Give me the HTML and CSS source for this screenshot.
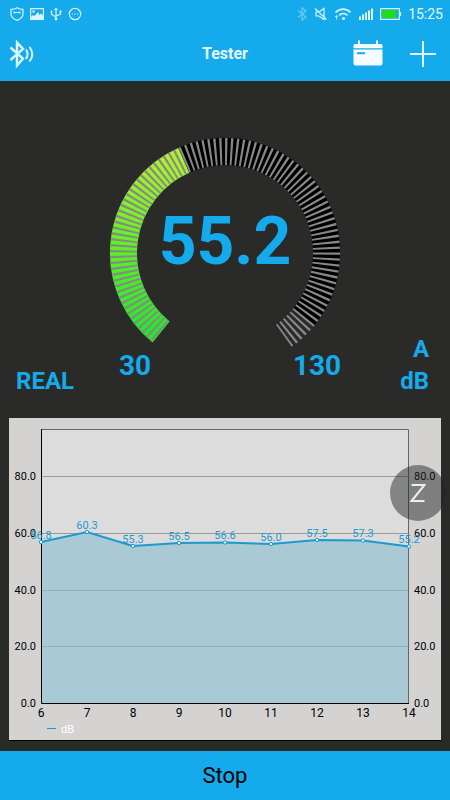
FILE: index.html
```html
<!DOCTYPE html>
<html lang="en">
  <head>
    <meta charset="UTF-8" />
    <meta name="viewport" content="width=device-width, initial-scale=1" />
    <title>Tester</title>
    <link rel="stylesheet" href="styles.css" />
  </head>
  <body>
    <div class="status-bar">
      <svg class="icon" width="14" height="14" viewBox="0 0 14 14">
        <path d="M7 .7C5 2 3 2.300 1 2.300V7c0 3 2.500 5 6 6.400 3.500-1.400 6-3.400 6-6.400V2.300C11 2.300 9 2 7 .7Z" />
        <path d="M3.500 4.500 6 5h2l2.500-.5v2L8 6H6l-2.500.5Z" class="solid" />
      </svg>
      <svg class="icon" width="14" height="12" viewBox="0 0 14 12">
        <path d="M.6.6h12.800v10.800H.6Z" />
        <path d="M1 11V9l2-2 1.500 1L8 4l1.500 3L11 5.500l2 2V11Z" class="solid" />
        <path d="M3 3h1v1H3Z" />
      </svg>
      <svg class="icon" width="12" height="14" viewBox="0 0 12 14">
        <path d="M6 2v10M1.500 5v2.500L6 10M10.500 4.500V7L6 9" />
        <path d="m4 3 2-2.500L8 3Z" class="solid" />
        <circle cx="6" cy="12" r="1.400" class="solid" />
        <circle cx="1.500" cy="4.500" r="1" class="solid" />
        <path d="M9.500 3.500h2v2h-2Z" class="solid" />
      </svg>
      <svg class="icon" width="14" height="14" viewBox="0 0 14 14">
        <circle cx="7" cy="7" r="5.700" />
        <path d="M3.700 7h1.300M6.400 7h1.300M9 7h1.300" />
      </svg>
      <span class="fill"></span>
      <svg class="icon faint" width="12" height="14" viewBox="0 0 12 14">
        <path d="m2 3.500 8 6.500-4 3.200V.8L10 4l-8 6.500" />
      </svg>
      <svg class="icon" width="14" height="14" viewBox="0 0 14 14">
        <path d="M2 5h3l5-3.500v11L5 9H2ZM1 1.500l11.500 11" />
      </svg>
      <svg class="icon wide" width="18" height="14" viewBox="0 0 18 14">
        <path d="M1.500 5.500c4.500-4.500 11-4.500 15 0M5 8.500c2.500-2.500 6-2.500 8.500 0" />
        <circle cx="9.500" cy="11.500" r="1.600" class="solid" />
        <path d="M2.500 8.500v4M1 10l1.500-1.500L4 10" class="thin" />
      </svg>
      <svg class="icon" width="16" height="14" viewBox="0 0 16 14">
        <path d="M2 9.500V13M5 7.500V13M8 5.500V13M11 3.500V13M14 1.500V13" class="bars" />
      </svg>
      <svg class="icon" width="22" height="12" viewBox="0 0 22 12">
        <path d="M.6.6h18.800v10.800H.6ZM20.500 4v4" />
        <path d="M2 2h14v8H2Z" class="charge" />
      </svg>
      <span class="time">15:25</span>
    </div>

    <header class="main-header">
      <button class="icon-btn" aria-label="Bluetooth">
        <svg width="26" height="28" viewBox="0 0 26 28">
          <path d="m1.500 7.500 12.500 11-6 7V2.500l6 6.500-12.500 11" class="bold" />
          <path d="M17 9.500c2 3 2 6.500 0 9.500M20.500 7c3.500 4.500 3.500 10 0 14.500" />
        </svg>
      </button>
      <h1>Tester</h1>
      <div class="actions">
        <button class="icon-btn" aria-label="History">
          <svg width="30" height="28" viewBox="0 0 30 28">
            <path d="M1.500 4H5V.5h2V4h16V.5h2V4h3.500l1 1.500v2.800H.5V5.500Z" class="solid" />
            <path d="M.5 9.500h29v14q0 2-2 2h-25q-2 0-2-2Z" class="solid" />
            <path d="M4 13.200h8" class="mark" />
          </svg>
        </button>
        <button class="icon-btn" aria-label="Add">
          <svg width="26" height="28" viewBox="0 0 26 28">
            <path d="M13 1v26M0 14h26" />
          </svg>
        </button>
      </div>
    </header>

    <main>
      <section class="meter">
        <span class="mode">REAL</span>
        <svg class="dial" viewBox="0 0 230 244">
          <defs>
            <linearGradient id="level" x1="0" y1="1" x2="0" y2="0">
              <stop offset="0" stop-color="#1eee22" />
              <stop offset="0.5" stop-color="#5cf322" />
              <stop offset="1" stop-color="#aef22c" />
            </linearGradient>
          </defs>
          <!-- centre 115,115, ring 88..115, one tick every 3 degrees -->
          <g class="ring">
            <path class="track" d="M73.700 22.300A101.500 101.500 0 0 1 193.900 178.900" />
            <path class="level" d="M51.100 193.900A101.500 101.500 0 0 1 73.700 22.300" />
            <path class="ticks" pathLength="286" d="M50.400 193.300A101.500 101.500 0 1 1 173.900 197.700" />
          </g>
          <text class="value" x="115" y="126">55.2</text>
          <text class="limit" x="25" y="237">30</text>
          <text class="limit" x="207" y="237">130</text>
        </svg>
        <span class="unit">A<br />dB</span>
      </section>

      <section class="chart">
        <svg viewBox="0 0 432 322">
          <rect class="plot" x="32" y="11" width="368" height="274" />
          <path class="grid" d="M32 58.500h368M32 115.500h368M32 172.500h368M32 228.500h368" />
          <path
            class="area"
            d="M32 124 78 114 124 128 170 125 216 124.500 262 126 308 122 354 122.500 400 128.500V285H32Z"
          />
          <path class="frame" d="M32 11.500h367.500V285" />
          <path class="axis" d="M32.500 11v274.500H400" />
          <path
            class="line"
            d="M32 124 78 114 124 128 170 125 216 124.500 262 126 308 122 354 122.500 400 128.500"
          />
          <g class="points">
            <circle cx="32" cy="124" r="1.700" />
            <circle cx="78" cy="114" r="1.700" />
            <circle cx="124" cy="128" r="1.700" />
            <circle cx="170" cy="125" r="1.700" />
            <circle cx="216" cy="124.500" r="1.700" />
            <circle cx="262" cy="126" r="1.700" />
            <circle cx="308" cy="122" r="1.700" />
            <circle cx="354" cy="122.500" r="1.700" />
            <circle cx="400" cy="128.500" r="1.700" />
          </g>
          <g class="y-left">
            <text x="27" y="62">80.0</text>
            <text x="27" y="119">60.0</text>
            <text x="27" y="176">40.0</text>
            <text x="27" y="232">20.0</text>
            <text x="27" y="289">0.0</text>
          </g>
          <g class="y-right">
            <text x="405" y="62">80.0</text>
            <text x="405" y="119">60.0</text>
            <text x="405" y="176">40.0</text>
            <text x="405" y="232">20.0</text>
            <text x="405" y="289">0.0</text>
          </g>
          <g class="x-labels">
            <text x="32" y="299">6</text>
            <text x="78" y="299">7</text>
            <text x="124" y="299">8</text>
            <text x="170" y="299">9</text>
            <text x="216" y="299">10</text>
            <text x="262" y="299">11</text>
            <text x="308" y="299">12</text>
            <text x="354" y="299">13</text>
            <text x="400" y="299">14</text>
          </g>
          <g class="values">
            <text x="32" y="121">56.8</text>
            <text x="78" y="111">60.3</text>
            <text x="124" y="125">55.3</text>
            <text x="170" y="122">56.5</text>
            <text x="216" y="121">56.6</text>
            <text x="262" y="123">56.0</text>
            <text x="308" y="119">57.5</text>
            <text x="354" y="119">57.3</text>
            <text x="400" y="125">55.2</text>
          </g>
          <path class="line legend-line" d="M38 310.500h9" />
          <text class="legend" x="52" y="315">dB</text>
        </svg>
        <button class="weighting" aria-label="Z">
          <svg width="16" height="20" viewBox="0 0 16 20">
            <path d="M1.500 2h13L1.500 18h13" />
          </svg>
        </button>
      </section>
    </main>

    <button class="stop-btn">Stop</button>
  </body>
</html>
```
FILE: styles.css
```css
:root {
  --blue: #14aaeb;
  --dark: #2a2a28;
}

* {
  box-sizing: border-box;
}

body {
  margin: 0;
  min-height: 100vh;
  display: flex;
  flex-direction: column;
  background: var(--dark);
  color: var(--blue);
  font-family: Roboto, sans-serif;
}

svg {
  display: block;
}

button {
  margin: 0;
  padding: 0;
  border: none;
  background: none;
  font-family: inherit;
  cursor: pointer;
}

.fill {
  flex: 1;
}

/* status bar */
.status-bar {
  height: 27px;
  padding: 0 7px 0 10px;
  display: flex;
  align-items: center;
  gap: 6px;
  background: var(--blue);
  color: #e4f8ff;
}

.icon {
  fill: none;
  stroke: #d8f5fd;
  stroke-width: 1.2;
}
.icon .solid {
  fill: #d8f5fd;
  stroke: none;
}
.icon .thin {
  stroke-width: 0.8;
}
.icon .bars {
  stroke-width: 2;
}
.icon .charge {
  fill: #1fdc1f;
  stroke: none;
}
.wide {
  stroke-width: 1.6;
}
.faint {
  opacity: 0.45;
}
.time {
  font-size: 14px;
}

/* title bar */
.main-header {
  height: 54px;
  padding: 0 14px 0 9px;
  display: grid;
  grid-template-columns: 1fr auto 1fr;
  align-items: center;
  background: var(--blue);
}
.main-header h1 {
  margin: 0 -5px 0 0;
  font-size: 16px;
  line-height: 20px;
  color: #e2f7ff;
}
.actions {
  display: flex;
  justify-content: flex-end;
  gap: 27px;
}
.icon-btn {
  justify-self: start;
}
.icon-btn svg {
  fill: none;
  stroke: #dcf7ff;
  stroke-width: 2;
}
.icon-btn .bold {
  stroke-width: 2.4;
}
.icon-btn .solid {
  fill: #f4fcff;
  stroke: none;
}
.icon-btn .mark {
  stroke: var(--blue);
}

main {
  flex: 1;
  padding: 57px 9px 11px;
}

/* sound level dial */
.meter {
  margin-bottom: 21px;
  display: grid;
  grid-template-columns: 1fr 230px 1fr;
  align-items: end;
  font-size: 24px;
  font-weight: bold;
  line-height: 32px;
}
.mode {
  padding-left: 7px;
}
.unit {
  padding-right: 12px;
  text-align: right;
}
.dial {
  margin-bottom: 15px;
  overflow: visible;
  fill: var(--blue);
  text-anchor: middle;
}
.ring {
  fill: none;
  stroke-width: 27;
}
.track {
  stroke: #000000;
}
.level {
  stroke: url(#level);
}
.ticks {
  stroke: #888888;
  stroke-dasharray: 1.2 1.8;
}
.value {
  font-size: 66px;
}
.limit {
  font-size: 28px;
}

/* history chart */
.chart {
  position: relative;
  background: #d4d3d2;
  box-shadow: 0 1px #000000;
}
.chart svg {
  width: 100%;
  font-size: 11px;
}
.plot {
  fill: #dcdcdc;
}
.grid,
.frame {
  fill: none;
  stroke: #999999;
}
.frame {
  stroke: #666666;
}
.area {
  fill: #8dbed0;
  fill-opacity: 0.65;
}
.axis {
  fill: none;
  stroke: #000000;
}
.line {
  fill: none;
  stroke: #1c9ad0;
  stroke-width: 2;
}
.chart .legend-line {
  stroke-width: 1;
}
.points {
  fill: #e8f6fa;
  stroke: #1c9ad0;
}
.y-left {
  text-anchor: end;
}
.x-labels {
  font-size: 12px;
  text-anchor: middle;
}
.values {
  fill: #1c9ad0;
  text-anchor: middle;
}
.legend {
  fill: #ffffff;
}

/* floating button over the chart edge */
.weighting {
  position: absolute;
  top: 47px;
  right: -5px;
  width: 56px;
  height: 56px;
  display: flex;
  align-items: center;
  justify-content: center;
  border-radius: 50%;
  background: rgba(34, 36, 38, 0.48);
}
.chart .weighting svg {
  width: 16px;
  fill: none;
  stroke: #eeeeee;
  stroke-width: 2;
}

.stop-btn {
  height: 49px;
  background: var(--blue);
  color: #000000;
  font-size: 22px;
}
```
